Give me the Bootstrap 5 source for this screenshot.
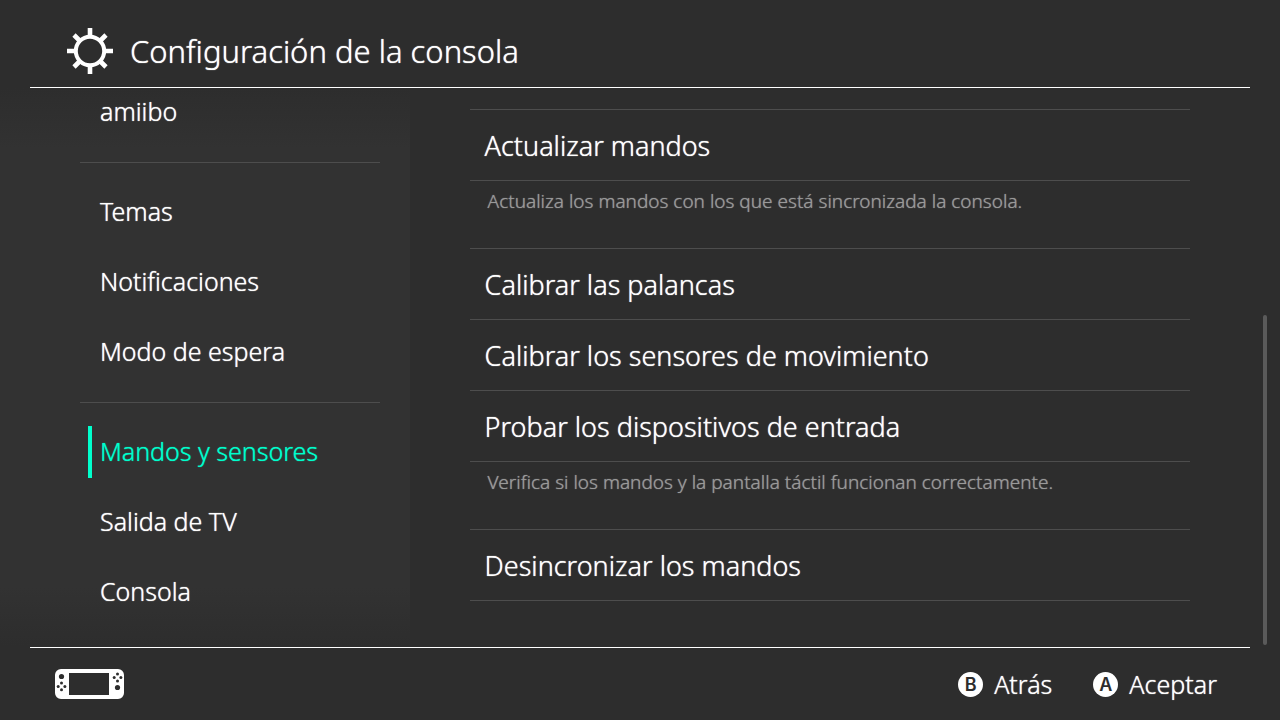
<!DOCTYPE html>
<html lang="es">
<head>
<meta charset="utf-8">
<meta name="viewport" content="width=device-width, initial-scale=1">
<title>Configuración de la consola</title>
<link href="https://cdn.jsdelivr.net/npm/bootstrap@5.3.0/dist/css/bootstrap.min.css" rel="stylesheet">
<style>
  :root { --ink: #fff; --ground: #2d2d2d; --panel: #323232; --rule: #4d4d4d; --muted: #999; --accent: #00ffcc; }
  body { background: var(--ground); color: var(--ink); font-family: "Noto Sans", "Open Sans", sans-serif; font-weight: 300; text-shadow: 0 0 1px currentColor; }
  .top-bar { height: 88px; margin: 0 30px; padding: 14px 0 0 36px; border-bottom: 1px solid var(--ink); }
  .page-title { font-size: 31px; font-weight: 300; line-height: 40px; }
  .side-panel { width: 32%; padding: 0 30px 20px 80px; background: linear-gradient(var(--ground), var(--panel) 60px, var(--panel) calc(100% - 60px), var(--ground)); }
  .side-link { height: 70px; padding: 0 0 2px 20px; font-size: 25px; line-height: 32px; color: var(--ink); }
  .side-link:hover { color: var(--accent); }
  .side-link.active { height: 52px; margin: 9px 0 9px 8px; padding-left: 8px; border-left: 4px solid var(--accent); color: var(--accent); text-shadow: 0 0 1px var(--accent); }
  .side-rule { height: 1px; margin: 15px 0 14px; background: var(--rule); }
  .main-panel { padding: 0 90px 46px 60px; }
  .option { height: 71px; padding: 2px 15px 0; border: 0; border-top: 1px solid var(--rule); background: none; color: var(--ink); font-size: 27px; font-weight: 300; line-height: 36px; text-shadow: inherit; }
  .option:last-child { height: 72px; border-bottom: 1px solid var(--rule); }
  .hint { height: 68px; padding: 7px 18px; border-top: 1px solid var(--rule); color: var(--muted); font-size: 19px; line-height: 26px; text-shadow: 0 0 1px var(--muted); }
  .scroll-thumb { right: 13px; bottom: 2px; width: 4px; height: 59%; border-radius: 2px; background: #5a5a5a; }
  .bottom-bar { height: 73px; margin: 0 30px; padding: 0 33px 0 24px; border-top: 1px solid var(--ink); }
  .key-list { gap: 41px; }
  .key-hint { gap: 11px; border: 0; background: none; color: var(--ink); font-size: 25px; font-weight: 300; line-height: 32px; text-shadow: inherit; }
  .key-cap { width: 25px; height: 25px; background: var(--ink); color: var(--ground); font: 600 18px/25px Inter, sans-serif; text-shadow: none; }
</style>
</head>
<body>
<div class="vh-100 d-flex flex-column overflow-hidden">
  <header class="top-bar d-flex align-items-center flex-shrink-0">
    <svg width="48" height="48" viewBox="0 0 48 48" fill="none" stroke="#fff" aria-hidden="true">
      <circle cx="24" cy="24" r="14.2" stroke-width="4"/>
      <path stroke-width="4.6" d="M24 1v8M24 39v8M1 24h8M39 24h8M8 8l5.500 5.500M34.500 34.500l5.500 5.500M40 8l-5.500 5.500M13.500 34.500L8 40"/>
    </svg>
    <h1 class="page-title mb-0 ms-3">Configuración de la consola</h1>
  </header>

  <div class="d-flex flex-grow-1 position-relative overflow-hidden">
    <nav class="side-panel d-flex flex-column justify-content-end flex-shrink-0" aria-label="Categorías">
      <a class="side-link d-flex align-items-center flex-shrink-0 text-decoration-none" href="#">amiibo</a>
      <div class="side-rule flex-shrink-0"></div>
      <a class="side-link d-flex align-items-center flex-shrink-0 text-decoration-none" href="#">Temas</a>
      <a class="side-link d-flex align-items-center flex-shrink-0 text-decoration-none" href="#">Notificaciones</a>
      <a class="side-link d-flex align-items-center flex-shrink-0 text-decoration-none" href="#">Modo de espera</a>
      <div class="side-rule flex-shrink-0"></div>
      <a class="side-link active d-flex align-items-center flex-shrink-0 text-decoration-none" href="#" aria-current="page">Mandos y sensores</a>
      <a class="side-link d-flex align-items-center flex-shrink-0 text-decoration-none" href="#">Salida de TV</a>
      <a class="side-link d-flex align-items-center flex-shrink-0 text-decoration-none" href="#">Consola</a>
    </nav>

    <main class="main-panel d-flex flex-column justify-content-end flex-grow-1">
      <div class="d-flex flex-column">
        <button type="button" class="option text-start">Actualizar mandos</button>
        <p class="hint mb-0">Actualiza los mandos con los que está sincronizada la consola.</p>
        <button type="button" class="option text-start">Calibrar las palancas</button>
        <button type="button" class="option text-start">Calibrar los sensores de movimiento</button>
        <button type="button" class="option text-start">Probar los dispositivos de entrada</button>
        <p class="hint mb-0">Verifica si los mandos y la pantalla táctil funcionan correctamente.</p>
        <button type="button" class="option text-start">Desincronizar los mandos</button>
      </div>
    </main>
    <div class="scroll-thumb position-absolute"></div>
  </div>

  <footer class="bottom-bar d-flex align-items-center justify-content-between flex-shrink-0">
    <svg width="71" height="32" viewBox="0 0 71 32" aria-hidden="true">
      <path fill="#fff" fill-rule="evenodd" d="M7 1h57a6 6 0 0 1 6 6v18a6 6 0 0 1-6 6H7a6 6 0 0 1-6-6V7a6 6 0 0 1 6-6zM15 5v22h40V5z"/>
      <g fill="#2d2d2d">
        <circle cx="7.500" cy="8.500" r="2.600"/><circle cx="63.500" cy="19.500" r="2.600"/>
        <circle cx="7.500" cy="15" r="1.500"/><circle cx="7.500" cy="21.800" r="1.500"/><circle cx="4.200" cy="18.400" r="1.500"/><circle cx="10.900" cy="18.400" r="1.500"/>
        <circle cx="63.500" cy="6.100" r="1.500"/><circle cx="63.500" cy="12.900" r="1.500"/><circle cx="60.200" cy="9.500" r="1.500"/><circle cx="66.900" cy="9.500" r="1.500"/>
      </g>
    </svg>
    <div class="key-list d-flex">
      <button type="button" class="key-hint d-flex align-items-center p-0"><span class="key-cap rounded-circle text-center">B</span>Atrás</button>
      <button type="button" class="key-hint d-flex align-items-center p-0"><span class="key-cap rounded-circle text-center">A</span>Aceptar</button>
    </div>
  </footer>
</div>
<script src="https://cdn.jsdelivr.net/npm/bootstrap@5.3.0/dist/js/bootstrap.bundle.min.js"></script>
</body>
</html>
